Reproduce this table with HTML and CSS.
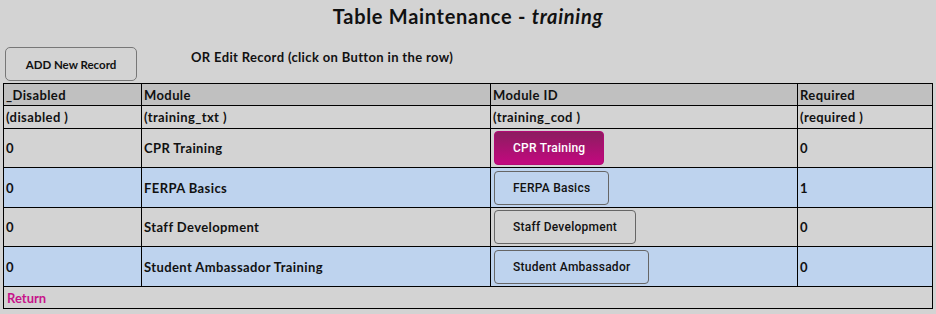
FILE: index.html
```html
<!DOCTYPE html>
<html>
<head>
<meta charset="utf-8">
<link rel="stylesheet" href="styles.css">
</head>
<body>
<div class="page">
  <h1 class="title">Table Maintenance - <em>training</em></h1>
  <div class="toolbar">
    <button class="add-btn">ADD New Record</button>
    <span class="hint">OR Edit Record (click on Button in the row)</span>
  </div>
  <table class="grid">
    <colgroup>
      <col class="c1"><col class="c2"><col class="c3"><col class="c4">
    </colgroup>
    <tr class="head"><td>_Disabled</td><td>Module</td><td>Module ID</td><td>Required</td></tr>
    <tr class="sub"><td>(disabled )</td><td>(training_txt )</td><td>(training_cod )</td><td>(required )</td></tr>
    <tr class="row odd"><td>0</td><td>CPR Training</td><td><button class="rec-btn active">CPR Training</button></td><td>0</td></tr>
    <tr class="row even"><td>0</td><td>FERPA Basics</td><td><button class="rec-btn">FERPA Basics</button></td><td>1</td></tr>
    <tr class="row odd"><td>0</td><td>Staff Development</td><td><button class="rec-btn">Staff Development</button></td><td>0</td></tr>
    <tr class="row even"><td>0</td><td>Student Ambassador Training</td><td><button class="rec-btn">Student Ambassador</button></td><td>0</td></tr>
    <tr class="foot"><td colspan="4"><a class="return" href="#">Return</a></td></tr>
  </table>
</div>
</body>
</html>
```

FILE: styles.css
```css
html, body {
  margin: 0;
  padding: 0;
  background: #d3d3d3;
}
.page {
  padding: 0 3px;
  font-family: "Lato", "DejaVu Sans", sans-serif;
  color: #111;
}
.title {
  margin: 0;
  padding-top: 4px;
  height: 27px;
  text-align: center;
  font-size: 20px;
  font-weight: 700;
  line-height: 24px;
  letter-spacing: 0.7px;
}
.title em {
  font-style: italic;
}
.toolbar {
  display: flex;
  align-items: flex-start;
  padding: 16px 0 2px 2px;
}
.add-btn {
  width: 132px;
  height: 34px;
  background: #d3d3d3;
  border: 1px solid #777;
  border-radius: 5px;
  font-family: "Lato", "DejaVu Sans", sans-serif;
  font-weight: 700;
  font-size: 11.5px;
  color: #111;
  padding: 0;
}
.hint {
  margin-left: 54px;
  margin-top: 2px;
  font-size: 13px;
  font-weight: 700;
  letter-spacing: 0.35px;
}
.grid {
  width: 930px;
  border-collapse: collapse;
  border: 1px solid #000;
  font-size: 13px;
  font-weight: 700;
  letter-spacing: 0.4px;
}
.c1 { width: 138px; }
.c2 { width: 349px; }
.c3 { width: 307px; }
.c4 { width: 135px; }
.grid td {
  border: 1px solid #000;
  padding: 0 2px;
  vertical-align: middle;
  text-align: left;
}
.head td {
  background: #c0c0c0;
  height: 21px;
}
.sub td {
  background: #d3d3d3;
  height: 22px;
}
.row td {
  padding: 0 2px;
}
.odd td { background: #d3d3d3; height: 38px; }
.even td { background: #bed3ee; height: 39px; }
.foot td {
  background: #d3d3d3;
  height: 21px;
}
.rec-btn {
  height: 34px;
  padding: 0 18px;
  margin-left: 1px;
  border: 1px solid #666;
  border-radius: 4px;
  background: transparent;
  font-family: "Roboto", sans-serif;
  font-weight: 500;
  font-size: 12px;
  letter-spacing: 0.25px;
  color: #111;
  display: block;
}
.rec-btn.active {
  background: linear-gradient(#8c1d60, #c3087f);
  border-color: #b30a75;
  color: #fff;
}
.return {
  color: #c7138a;
  text-decoration: none;
  font-weight: 700;
  letter-spacing: 0;
  padding-left: 1px;
}
```
